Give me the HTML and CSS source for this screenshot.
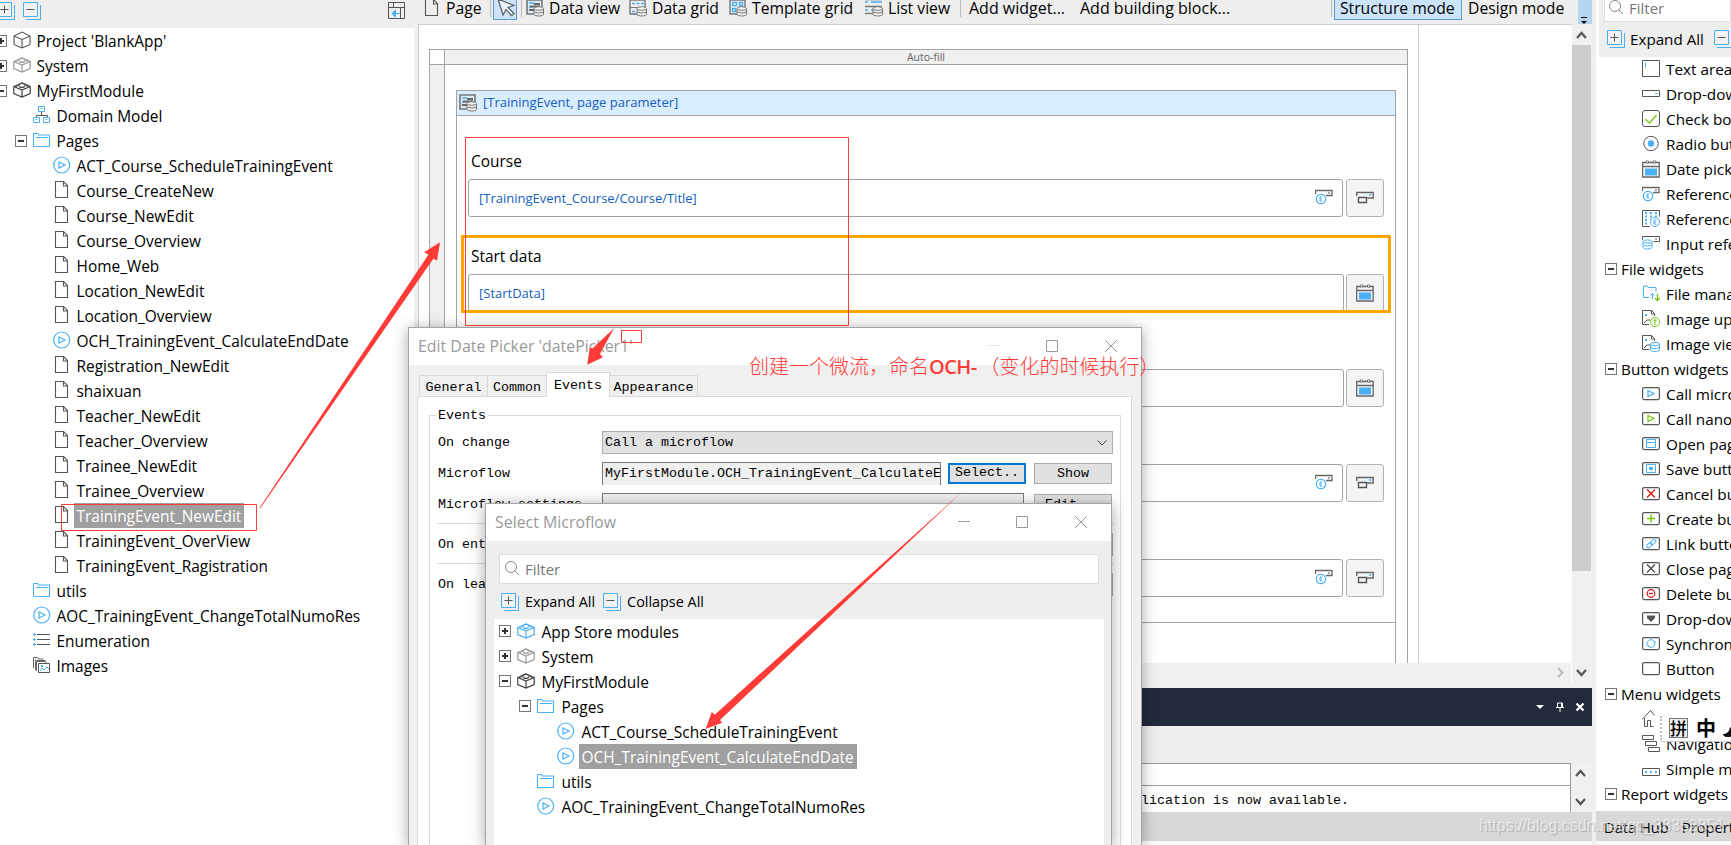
FILE: index.html
```html
<!DOCTYPE html>
<html lang="en">

<head>
    <meta charset="UTF-8">
    <meta name="viewport" content="width=device-width, initial-scale=1.0">
    <title>BlankApp</title>
    <link rel="stylesheet" href="styles.css">
</head>

<body>
    <!-- icon set -->
    <svg class="sprite">
        <symbol id="plus" viewBox="0 0 18 18"><path d="M3 17.5h14.5V3" stroke="#4ab0f5"/><path d="M.5.5h14v14H.5z" fill="#f2f2f2" stroke="#4ab0f5"/><path d="M3.5 7.5h8M7.5 3.5v8" stroke="#555"/></symbol>
        <symbol id="minus" viewBox="0 0 18 18"><path d="M3 17.5h14.5V3" stroke="#4ab0f5"/><path d="M.5.5h14v14H.5z" fill="#f2f2f2" stroke="#4ab0f5"/><path d="M3.5 7.5h8" stroke="#555"/></symbol>
        <symbol id="dock" viewBox="0 0 18 18"><path d="M.5.5h16v16H.5zM.5 5.500h16M12.500 5.500v11M5.500.5v5" stroke="#555"/><path d="M4 11.500h8M7.500 8l-3.500 3.500 3.500 3.500z" stroke="#4ab0f5" fill="#4ab0f5"/></symbol>
        <symbol id="cube" viewBox="0 0 18 18"><path d="M9 1l8 4v8.500L9 17l-8-3.500V5zM1 5l8 3.500L17 5M9 8.500V17" stroke="#444"/></symbol>
        <symbol id="brick" viewBox="0 0 18 18"><path d="M.8 5.500L9 2l8.200 3.500v7L9 16l-8.200-3.500zM.8 5.500L9 9l8.200-3.500M9 9v7" stroke="currentColor" stroke-width="1.200"/><path d="M6 3.500v2l3 1 3-1v-2L9 2zM3 5.500l2.500-1.300M12.500 4.200L15 5.500M6.500 7l2.500-1 2.500 1" stroke="currentColor"/></symbol>
        <symbol id="domain" viewBox="0 0 18 18"><path d="M8.500 6v3M3.500 11.500v-2h11v2" stroke="#555"/><path d="M5.500.5h6v5h-6zM.5 11.500h6v5h-6zM10.500 11.500h6v5h-6zM7.500 2.500h2M2.500 13.500h2M12.500 13.500h2" stroke="#4ab0f5"/></symbol>
        <symbol id="folder" viewBox="0 0 18 18"><path d="M.5 15.500V2.500h4l1 1.500h11v11.500zM3 6.500h12" stroke="#4ab0f5" stroke-width="1.100"/></symbol>
        <symbol id="flow" viewBox="0 0 18 18"><circle cx="8.700" cy="9" r="8" stroke="#4ab0f5" stroke-width="1.200"/><path d="M6 6l6 3-6 3z" stroke="#4ab0f5" stroke-width="1.200"/></symbol>
        <symbol id="page" viewBox="0 0 18 18"><path d="M2.500.5h8l4 4v12h-12zM10.500.5v4.500h4" stroke="#555" stroke-width="1.100"/></symbol>
        <symbol id="enum" viewBox="0 0 18 18"><path d="M4 3.500h13M4 8.500h13M4 13.500h13" stroke="#555"/><path d="M0 3.500h3M1.500 2v3M0 8.500h3M1.500 7v3M0 13.500h3M1.500 12v3" stroke="#4ab0f5"/></symbol>
        <symbol id="images" viewBox="0 0 18 18"><path d="M.5 12V1.500h4l1 1.500h5M2.500 14V3.500M3.500 4.500h9M3.500 15V5.500h9l1 2" stroke="#666"/><path d="M5.500 7.500h11v9h-11z" stroke="#555"/><path d="M7 15l2-3 2 2 3-3 2 2" stroke="#4ab0f5"/><path d="M8 9h2v2H8z" fill="#4ab0f5"/></symbol>
        <symbol id="search" viewBox="0 0 18 18"><circle cx="7" cy="7" r="5.500" stroke="#888"/><path d="M11 11l4 4" stroke="#888"/></symbol>
        <symbol id="cursor" viewBox="0 0 18 18"><path d="M1 0l16 6.500-6 2 6 6-2.500 2-5.500-6-3 5.500z" fill="#e8f3fd" stroke="#666" stroke-width="1.300"/></symbol>
        <symbol id="db" viewBox="0 0 18 18"><path d="M8 9.500v6c1 2 9 2 9.500 0v-6" fill="#eee" stroke="#777"/><ellipse cx="12.800" cy="9.500" rx="4.700" ry="1.800" fill="#f4f4f4" stroke="#777"/><path d="M8 12.500c1 1.800 9 1.800 9.500 0" stroke="#777"/></symbol>
        <symbol id="dview" viewBox="0 0 18 18"><path d="M1 1h15v14H1z" fill="#dfe9f0" stroke="#777" stroke-width="1.600"/><path d="M3 4h5M3 8h3" stroke="#4ab0f5" stroke-width="1.500"/><path d="M8 5h6M4 7.500h10M3 11h5" stroke="#666" stroke-width="1.800"/><use href="#db"/></symbol>
        <symbol id="dgrid" viewBox="0 0 18 18"><path d="M1 1h15v14H1z" stroke="#777" stroke-width="1.400"/><path d="M3 4.500h3M7.500 4.500h3M12 4.500h3M3 12.500h3" stroke="#4ab0f5" stroke-width="1.500"/><path d="M1 8.500h15" stroke="#777"/><use href="#db"/></symbol>
        <symbol id="tgrid" viewBox="0 0 18 18"><path d="M1 1h15v14H1z" stroke="#777" stroke-width="1.400"/><path d="M3.500 3.500h4v3h-4zM10.500 3.500h3v3h-3zM3.500 9.500h3v3h-3z" stroke="#4ab0f5" stroke-width="1.400"/><use href="#db"/></symbol>
        <symbol id="lview" viewBox="0 0 18 18"><path d="M0 3h3M6 3h11M0 11h3M6 11h4" stroke="#4ab0f5" stroke-width="1.500"/><path d="M0 7.500h17M0 14.500h8M0 .5h17" stroke="#777" stroke-width="1.400"/><use href="#db"/></symbol>
        <symbol id="ref" viewBox="0 0 18 18"><path d="M.5 6V2.500h16.500v5h-6" stroke="#666" stroke-width="1.300"/><path d="M13 5h2" stroke="#555"/><circle cx="6" cy="11" r="4.700" stroke="#4ab0f5" stroke-width="1.200"/><path d="M7.500 9H5v4h2.500M5 11h2" stroke="#4ab0f5"/></symbol>
        <symbol id="combo" viewBox="0 0 18 18"><path d="M.7 7V3.500h16.500v5.500h-6" stroke="#666" stroke-width="1.400"/><path d="M2.500 8.500h8v5h-8z" stroke="#555" stroke-width="1.400"/><path d="M13 6h2.500" stroke="#4ab0f5" stroke-width="1.500"/></symbol>
        <symbol id="calendar" viewBox="0 0 18 18"><path d="M.7 2.500h16.500v14.500H.7zM.7 6.500h16.500" stroke="#666" stroke-width="1.300"/><circle cx="5.500" cy="2" r="1.300" fill="#fff" stroke="#666"/><circle cx="12.500" cy="2" r="1.300" fill="#fff" stroke="#666"/><path d="M3 8.500h12v7H3z" fill="#4ab0f5"/></symbol>
        <symbol id="textarea" viewBox="0 0 18 18"><path d="M.5.5h17v16H.5z" stroke="#555"/><path d="M3.500 2.500v5" stroke="#4ab0f5"/></symbol>
        <symbol id="dropdown" viewBox="0 0 18 18"><path d="M.5 5.500h17v6H.5z" stroke="#555"/><path d="M13 8.500h3" stroke="#4ab0f5"/></symbol>
        <symbol id="check" viewBox="0 0 18 18"><rect x=".5" y=".5" width="17" height="16" rx="2.500" stroke="#555"/><path d="M3.500 9l4 4 7-8" stroke="#76c80e" stroke-width="1.200"/></symbol>
        <symbol id="radio" viewBox="0 0 18 18"><circle cx="9" cy="8.500" r="7.200" stroke="#555"/><circle cx="9" cy="8.500" r="3.200" fill="#4ab0f5"/></symbol>
        <symbol id="refset" viewBox="0 0 18 18"><path d="M8 16.500H.5V.5h17v6" stroke="#555"/><path d="M4 2v13M9 2v8M14 2v5" stroke="#4ab0f5" stroke-width="2" stroke-dasharray="2 1.500"/><circle cx="13" cy="12" r="4.500" stroke="#4ab0f5" fill="#fff"/><path d="M14.500 10H12v4h2.500M12 12h2" stroke="#4ab0f5"/></symbol>
        <symbol id="refdb" viewBox="0 0 18 18"><path d="M.5 5V1.500h17v5h-6" stroke="#555"/><path d="M13 4h2" stroke="#555"/><path d="M1 6.500v6c1 2 8 2 9 0v-6" stroke="#4ab0f5" fill="#fff"/><ellipse cx="5.500" cy="6.500" rx="4.500" ry="1.600" stroke="#4ab0f5"/><path d="M1 9.500c1 2 8 2 9 0" stroke="#4ab0f5"/></symbol>
        <symbol id="filemgr" viewBox="0 0 18 18"><path d="M7 12.500H1.500V1h4l1 1.500h7.500V7M10.500 14V8.500M8.500 10.500l2-2 2 2" stroke="#4ab0f5"/><path d="M15.500 8.500v7M13 13l2.500 2.500L18 13" stroke="#76c80e" stroke-width="1.300"/></symbol>
        <symbol id="imgup" viewBox="0 0 18 18"><path d="M7 14.500H.5V.5h9l3 3V6M9.500.5V4h3M2 13l3-3M5 10h3" stroke="#555"/><path d="M3 4h2v2H3z" fill="#4ab0f5"/><circle cx="13" cy="12" r="4.500" stroke="#76c80e" fill="#fff"/><path d="M13 15V9.500M11 11.500l2-2 2 2" stroke="#76c80e"/></symbol>
        <symbol id="imgview" viewBox="0 0 18 18"><path d="M7 14.500H.5V.5h9l3 3V6M9.500.5V4h3M2 13l3-3M5 10h3" stroke="#555"/><path d="M3 4h2v2H3z" fill="#4ab0f5"/><path d="M8.500 9v6c1 2 8 2 9 0V9" stroke="#4ab0f5" fill="#fff"/><ellipse cx="13" cy="9" rx="4.500" ry="1.600" stroke="#4ab0f5" fill="#fff"/><path d="M8.500 12c1 2 8 2 9 0" stroke="#4ab0f5"/></symbol>
        <symbol id="btn" viewBox="0 0 18 18"><rect x=".6" y="2.600" width="16.800" height="12" rx="1.500" stroke="#555" stroke-width="1.200"/></symbol>
        <symbol id="nav" viewBox="0 0 18 18"><path d="M.5.5h11v4H.5zM3.500 6.500h11v4h-11zM6.500 12.500h11v4h-11z" stroke="#555"/></symbol>
        <symbol id="home" viewBox="0 0 18 18"><path d="M0 9.500L8.500.5l4 5M2.500 8v8.500h3v-6h3v6h3" stroke="#555"/></symbol>
        <symbol id="simple" viewBox="0 0 18 18"><path d="M.5 8.500h17v7H.5z" stroke="#555"/><path d="M3 12h2M8 12h2M13 12h2" stroke="#4ab0f5" stroke-width="2"/></symbol>
    </svg>

    <div class="app">
        <aside class="explorer">
            <div class="explorer-bar">
                <svg class="icon"><use href="#plus"/></svg>
                <svg class="icon"><use href="#minus"/></svg>
                <svg class="icon dock"><use href="#dock"/></svg>
            </div>
            <ul class="tree">
                <li><i class="toggle closed"></i><svg class="icon"><use href="#cube"/></svg><span>Project 'BlankApp'</span></li>
                <li><i class="toggle closed"></i><svg class="icon grey"><use href="#brick"/></svg><span>System</span></li>
                <li><i class="toggle"></i><svg class="icon"><use href="#brick"/></svg><span>MyFirstModule</span></li>
                <li class="l1"><svg class="icon"><use href="#domain"/></svg><span>Domain Model</span></li>
                <li class="l1"><i class="toggle"></i><svg class="icon"><use href="#folder"/></svg><span>Pages</span></li>
                <li class="l2"><svg class="icon"><use href="#flow"/></svg><span>ACT_Course_ScheduleTrainingEvent</span></li>
                <li class="l2"><svg class="icon"><use href="#page"/></svg><span>Course_CreateNew</span></li>
                <li class="l2"><svg class="icon"><use href="#page"/></svg><span>Course_NewEdit</span></li>
                <li class="l2"><svg class="icon"><use href="#page"/></svg><span>Course_Overview</span></li>
                <li class="l2"><svg class="icon"><use href="#page"/></svg><span>Home_Web</span></li>
                <li class="l2"><svg class="icon"><use href="#page"/></svg><span>Location_NewEdit</span></li>
                <li class="l2"><svg class="icon"><use href="#page"/></svg><span>Location_Overview</span></li>
                <li class="l2"><svg class="icon"><use href="#flow"/></svg><span>OCH_TrainingEvent_CalculateEndDate</span></li>
                <li class="l2"><svg class="icon"><use href="#page"/></svg><span>Registration_NewEdit</span></li>
                <li class="l2"><svg class="icon"><use href="#page"/></svg><span>shaixuan</span></li>
                <li class="l2"><svg class="icon"><use href="#page"/></svg><span>Teacher_NewEdit</span></li>
                <li class="l2"><svg class="icon"><use href="#page"/></svg><span>Teacher_Overview</span></li>
                <li class="l2"><svg class="icon"><use href="#page"/></svg><span>Trainee_NewEdit</span></li>
                <li class="l2"><svg class="icon"><use href="#page"/></svg><span>Trainee_Overview</span></li>
                <li class="l2 selected"><svg class="icon"><use href="#page"/></svg><span>TrainingEvent_NewEdit</span></li>
                <li class="l2"><svg class="icon"><use href="#page"/></svg><span>TrainingEvent_OverView</span></li>
                <li class="l2"><svg class="icon"><use href="#page"/></svg><span>TrainingEvent_Ragistration</span></li>
                <li class="l1"><svg class="icon"><use href="#folder"/></svg><span>utils</span></li>
                <li class="l1"><svg class="icon"><use href="#flow"/></svg><span>AOC_TrainingEvent_ChangeTotalNumoRes</span></li>
                <li class="l1"><svg class="icon"><use href="#enum"/></svg><span>Enumeration</span></li>
                <li class="l1"><svg class="icon"><use href="#images"/></svg><span>Images</span></li>
            </ul>
        </aside>

        <main class="editor">
            <div class="toolbar">
                <div class="tool t-page"><svg class="icon"><use href="#page"/></svg><span>Page</span></div>
                <i class="sep"></i>
                <div class="tool t-cursor"><svg class="icon"><use href="#cursor"/></svg></div>
                <i class="sep"></i>
                <div class="tool t-dview"><svg class="icon"><use href="#dview"/></svg><span>Data view</span></div>
                <div class="tool t-dgrid"><svg class="icon"><use href="#dgrid"/></svg><span>Data grid</span></div>
                <div class="tool t-tgrid"><svg class="icon"><use href="#tgrid"/></svg><span>Template grid</span></div>
                <div class="tool t-lview"><svg class="icon"><use href="#lview"/></svg><span>List view</span></div>
                <i class="sep"></i>
                <div class="tool t-widget"><span>Add widget...</span></div>
                <div class="tool t-block"><span>Add building block...</span></div>
                <i class="sep"></i>
                <div class="tool t-structure"><span>Structure mode</span></div>
                <div class="tool t-design"><span>Design mode</span></div>
                <div class="overflow"><svg width="8" height="8"><path d="M1 .5h6" stroke="#000"/><path d="M1 4h6L4 7z" fill="#000"/></svg></div>
            </div>

            <div class="work">
                <div class="canvas">
                    <div class="sheet">
                        <div class="layout">
                            <div class="layout-corner"></div>
                            <div class="layout-top">Auto-fill</div>
                            <div class="layout-side"></div>
                            <div class="layout-body">
                                <div class="dataview">
                                    <div class="dataview-head"><svg class="icon"><use href="#dview"/></svg><span>[TrainingEvent, page parameter]</span></div>
                                    <div class="dataview-body">
                                        <div class="group">
                                            <label>Course</label>
                                            <div class="field">
                                                <div class="box"><span>[TrainingEvent_Course/Course/Title]</span><svg class="icon"><use href="#ref"/></svg></div>
                                                <div class="side"><svg class="icon"><use href="#combo"/></svg></div>
                                            </div>
                                        </div>
                                        <div class="group active">
                                            <label>Start data</label>
                                            <div class="field">
                                                <div class="box date"><span>[StartData]</span></div>
                                                <div class="side"><svg class="icon"><use href="#calendar"/></svg></div>
                                            </div>
                                        </div>
                                        <div class="group">
                                            <label></label>
                                            <div class="field">
                                                <div class="box date"></div>
                                                <div class="side"><svg class="icon"><use href="#calendar"/></svg></div>
                                            </div>
                                        </div>
                                        <div class="group">
                                            <label></label>
                                            <div class="field">
                                                <div class="box"><svg class="icon"><use href="#ref"/></svg></div>
                                                <div class="side"><svg class="icon"><use href="#combo"/></svg></div>
                                            </div>
                                        </div>
                                        <div class="group">
                                            <label></label>
                                            <div class="field">
                                                <div class="box"><svg class="icon"><use href="#ref"/></svg></div>
                                                <div class="side"><svg class="icon"><use href="#combo"/></svg></div>
                                            </div>
                                        </div>
                                    </div>
                                </div>
                            </div>
                        </div>
                    </div>
                </div>
                <div class="vscroll">
                    <svg width="20" height="21"><path d="M5 14l4.500-5 4.500 5" stroke="#555" stroke-width="2.200"/></svg>
                    <div class="thumb"></div>
                </div>
            </div>
            <div class="hscroll">
                <svg class="right" width="20" height="20"><path d="M8 5l4.500 4.500L8 14" stroke="#bbb" stroke-width="2"/></svg>
                <svg class="down" width="20" height="20"><path d="M5 7l4.500 5L14 7" stroke="#555" stroke-width="2.200"/></svg>
            </div>

            <div class="console-head">
                <svg width="10" height="10"><path d="M1 3h8L5 7z" fill="#fff"/></svg>
                <svg width="10" height="10"><path d="M2.500 5V1h5v4M1 5.500h8M5 6v4M6.500 1v4" stroke="#fff"/></svg>
                <svg width="10" height="10"><path d="M1.500 1.500l7 7M8.500 1.500l-7 7" stroke="#fff" stroke-width="2.200"/></svg>
            </div>
            <div class="console-gap"></div>
            <div class="console">
                <div class="console-rows">
                    <div class="console-title"></div>
                    <div class="console-row">plication is now available.</div>
                </div>
                <div class="console-scroll">
                    <svg width="20" height="20"><path d="M5 13l4.500-5 4.500 5" stroke="#555" stroke-width="2.200"/></svg>
                    <svg width="20" height="20"><path d="M5 7l4.500 5L14 7" stroke="#555" stroke-width="2.200"/></svg>
                </div>
            </div>
            <div class="footer"></div>
        </main>

        <aside class="toolbox">
            <div class="toolbox-head">
                <div class="filter"><svg class="icon"><use href="#search"/></svg><span>Filter</span></div>
                <div class="actions">
                    <svg class="icon"><use href="#plus"/></svg><span>Expand All</span>
                    <svg class="icon"><use href="#minus"/></svg>
                </div>
            </div>
            <ul class="widgets">
                <li><svg class="icon"><use href="#textarea"/></svg><span>Text area</span></li>
                <li><svg class="icon"><use href="#dropdown"/></svg><span>Drop-down</span></li>
                <li><svg class="icon"><use href="#check"/></svg><span>Check box</span></li>
                <li><svg class="icon"><use href="#radio"/></svg><span>Radio buttons</span></li>
                <li><svg class="icon"><use href="#calendar"/></svg><span>Date picker</span></li>
                <li><svg class="icon"><use href="#ref"/></svg><span>Reference selector</span></li>
                <li><svg class="icon"><use href="#refset"/></svg><span>Reference set</span></li>
                <li><svg class="icon"><use href="#refdb"/></svg><span>Input reference</span></li>
                <li class="head"><i class="toggle"></i><span>File widgets</span></li>
                <li><svg class="icon"><use href="#filemgr"/></svg><span>File manager</span></li>
                <li><svg class="icon"><use href="#imgup"/></svg><span>Image uploader</span></li>
                <li><svg class="icon"><use href="#imgview"/></svg><span>Image viewer</span></li>
                <li class="head"><i class="toggle"></i><span>Button widgets</span></li>
                <li><svg class="icon"><use href="#btn"/><path d="M6 5.500l6 3-6 3z" stroke="#4ab0f5" stroke-width="1.200"/></svg><span>Call microflow</span></li>
                <li><svg class="icon"><use href="#btn"/><path d="M6 5.500l6 3-6 3z" stroke="#76c80e" stroke-width="1.200"/></svg><span>Call nanoflow</span></li>
                <li><svg class="icon"><use href="#btn"/><path d="M4.500 4.500h9v8h-9zM4.500 7.500h9" stroke="#4ab0f5"/></svg><span>Open page</span></li>
                <li><svg class="icon"><use href="#btn"/><path d="M4.500 4.500h9v8h-9z" stroke="#4ab0f5"/><circle cx="9" cy="8.500" r="2" fill="#4ab0f5"/></svg><span>Save button</span></li>
                <li><svg class="icon"><use href="#btn"/><path d="M5 4.500l8 8M13 4.500l-8 8" stroke="#e01010" stroke-width="1.300"/></svg><span>Cancel button</span></li>
                <li><svg class="icon"><use href="#btn"/><path d="M5 8.500h8M9 4.500v8" stroke="#76c80e" stroke-width="1.500"/></svg><span>Create button</span></li>
                <li><svg class="icon"><use href="#btn"/><g transform="rotate(-40 9 8.500)" stroke="#4ab0f5"><rect x="3.500" y="7" width="6" height="3.500" rx="1.700"/><rect x="8.500" y="7" width="6" height="3.500" rx="1.700"/></g></svg><span>Link button</span></li>
                <li><svg class="icon"><use href="#btn"/><path d="M5 4.500l8 8M13 4.500l-8 8" stroke="#444" stroke-width="1.200"/></svg><span>Close page</span></li>
                <li><svg class="icon"><use href="#btn"/><circle cx="9" cy="8.500" r="3.800" stroke="#e01010" stroke-width="1.200"/><path d="M7 8.500h4" stroke="#e01010" stroke-width="1.200"/></svg><span>Delete button</span></li>
                <li><svg class="icon"><use href="#btn"/><path d="M5 5.500h8v2.500l-4 4-4-4z" fill="#555"/></svg><span>Drop-down button</span></li>
                <li><svg class="icon"><use href="#btn"/><path d="M5 9a4 4 0 0 1 7-3M13 8a4 4 0 0 1-7 3M11 7h3M4 10h3" stroke="#4ab0f5"/></svg><span>Synchronize</span></li>
                <li><svg class="icon"><use href="#btn"/></svg><span>Button</span></li>
                <li class="head"><i class="toggle"></i><span>Menu widgets</span></li>
                <li><svg class="icon"><use href="#home"/></svg></li>
                <li><svg class="icon"><use href="#nav"/></svg><span>Navigation</span></li>
                <li><svg class="icon"><use href="#simple"/></svg><span>Simple menu</span></li>
                <li class="head"><i class="toggle"></i><span>Report widgets</span></li>
            </ul>
            <div class="tabs-bottom"><span>Data Hub</span><span>Properties</span></div>
        </aside>
    </div>

    <!-- date picker dialog -->
    <div class="dialog edit">
        <div class="titlebar">
            <span class="title">Edit Date Picker 'datePicker1'</span>
            <svg class="winbtns" width="130" height="14"><path d="M0 6.500h12" stroke="#e5e5e5"/><path d="M58.500 1.500h11v11h-11z" stroke="#999"/><path d="M117 1l12 12M129 1l-12 12" stroke="#999"/></svg>
        </div>
        <div class="dialog-tabs">
            <span class="tab general">General</span>
            <span class="tab common">Common</span>
            <span class="tab events">Events</span>
            <span class="tab appearance">Appearance</span>
        </div>
        <div class="tabpage">
            <div class="fieldset">
                <span class="legend">Events</span>
                <div class="row">
                    <span class="name">On change</span>
                    <div class="select">Call a microflow<svg width="10" height="6"><path d="M.5.5L5 5 9.500.5" stroke="#444"/></svg></div>
                </div>
                <div class="row">
                    <span class="name">Microflow</span>
                    <div class="entry">MyFirstModule.OCH_TrainingEvent_CalculateEndDate</div>
                    <div class="push focus">Select..</div>
                    <div class="push">Show</div>
                </div>
                <div class="row">
                    <span class="name">Microflow settings</span>
                    <div class="entry wide"></div>
                    <div class="push edit-btn">Edit...</div>
                </div>
                <div class="row ruled first">
                    <span class="name">On enter</span>
                    <div class="select"></div>
                </div>
                <div class="row ruled">
                    <span class="name">On leave</span>
                    <div class="select"></div>
                </div>
            </div>
        </div>
    </div>

    <!-- microflow picker -->
    <div class="dialog pick">
        <div class="titlebar">
            <span class="title">Select Microflow</span>
            <svg class="winbtns" width="130" height="14"><path d="M0 6.500h12" stroke="#999"/><path d="M58.500 1.500h11v11h-11z" stroke="#999"/><path d="M117 1l12 12M129 1l-12 12" stroke="#999"/></svg>
        </div>
        <div class="filter"><svg class="icon"><use href="#search"/></svg><span>Filter</span></div>
        <div class="actions">
            <svg class="icon"><use href="#plus"/></svg><span>Expand All</span>
            <svg class="icon"><use href="#minus"/></svg><span>Collapse All</span>
        </div>
        <ul class="tree">
            <li><i class="toggle closed"></i><svg class="icon blue"><use href="#brick"/></svg><span>App Store modules</span></li>
            <li><i class="toggle closed"></i><svg class="icon grey"><use href="#brick"/></svg><span>System</span></li>
            <li><i class="toggle"></i><svg class="icon"><use href="#brick"/></svg><span>MyFirstModule</span></li>
            <li class="l1"><i class="toggle"></i><svg class="icon"><use href="#folder"/></svg><span>Pages</span></li>
            <li class="l2"><svg class="icon"><use href="#flow"/></svg><span>ACT_Course_ScheduleTrainingEvent</span></li>
            <li class="l2 selected"><svg class="icon"><use href="#flow"/></svg><span>OCH_TrainingEvent_CalculateEndDate</span></li>
            <li class="l1"><svg class="icon"><use href="#folder"/></svg><span>utils</span></li>
            <li class="l1"><svg class="icon"><use href="#flow"/></svg><span>AOC_TrainingEvent_ChangeTotalNumoRes</span></li>
        </ul>
    </div>

    <!-- input method bar -->
    <div class="ime">
        <i class="grip"></i><span class="pin">拼</span><span class="zhong">中</span>
        <svg width="10" height="12"><path d="M0 8c4 0 6-2 7-7 5 5 3 11-3 10-2 0-4-1-4-3z" fill="#111"/></svg>
    </div>

    <!-- red marks -->
    <svg class="marks" width="1731" height="845">
        <g stroke="#ff3b38">
            <path d="M465.500 137.500h383v188h-383zM621.500 330.500h20v12h-20zM61.500 504.500h195v26h-195z"/>
        </g>
        <g fill="#ff3b38">
            <path d="M259.500 508L428.500 254.500 424 252.300 440 242.300 437 260.700 433.500 258.500 260.500 508z"/>
            <path d="M614.300 328L592.700 348.300 589.700 348 587.300 364.800 603 357.300 600 354 601.500 351z"/>
            <path d="M963 491L715 714.500 711.700 712.300 705.600 729 722.300 722.700 720 720z"/>
        </g>
    </svg>
    <div class="note">创建一个微流，命名<b>OCH-</b>（变化的时候执行）</div>
    <div class="watermark">https://blog.csdn.net/qq_38352851</div>
</body>

</html>
```
FILE: styles.css
```css
*,
*::before,
*::after {
    box-sizing: border-box;
    margin: 0;
    padding: 0;
}

body {
    position: relative;
    width: 1731px;
    height: 845px;
    overflow: hidden;
    background: #f0f0f0;
    font-family: "Open Sans", "Noto Sans", sans-serif;
    font-size: 15.450px;
    color: #000;
}

svg {
    fill: none;
    flex: none;
}

.sprite {
    position: absolute;
    width: 0;
    height: 0;
}

.icon {
    width: 18px;
    height: 18px;
    color: #444;
}

.icon.grey {
    color: #999;
}

.icon.blue {
    color: #4ab0f5;
}

.app {
    display: flex;
    height: 845px;
    background: #f0f0f0;
}

/* project explorer */
.explorer {
    width: 414px;
    margin-right: 4px;
    background: #fff;
    overflow: hidden;
    flex: none;
}

.explorer-bar {
    display: flex;
    gap: 8px;
    height: 28px;
    padding: 2px 8px 0 0;
    margin-left: -3px;
    background: #eee;
}

.explorer-bar .dock {
    margin-left: auto;
}

.tree,
.widgets {
    list-style: none;
}

.tree li,
.widgets li {
    display: flex;
    align-items: center;
    height: 25px;
    white-space: nowrap;
}

.tree li {
    position: relative;
    padding-left: 13px;
}

.tree .l1 {
    padding-left: 33px;
}

.tree .l2 {
    padding-left: 53px;
}

.tree .icon {
    margin-top: -1px;
}

.tree span {
    height: 25px;
    line-height: 26px;
    margin-left: 3px;
    padding: 0 3px 0 2.500px;
}

.tree .selected span {
    background: #a0a0a0;
    color: #fff;
}

.toggle {
    position: relative;
    flex: none;
    width: 12px;
    height: 12px;
    border: 1px solid #777;
    background: #fff;
}

.tree .toggle {
    margin-left: -18px;
    margin-right: 6px;
}

.pick .toggle {
    margin-top: -2px;
}

.toggle::before {
    content: "";
    position: absolute;
    left: 2px;
    top: 4px;
    width: 6px;
    height: 2px;
    background: #333;
}

.toggle.closed::after {
    content: "";
    position: absolute;
    left: 4px;
    top: 2px;
    width: 2px;
    height: 6px;
    background: #333;
}

/* page editor */
.editor {
    display: flex;
    flex-direction: column;
    width: 1174px;
    flex: none;
    margin-right: 4px;
}

.toolbar {
    display: flex;
    height: 24px;
    background: #eee;
    font-size: 15.700px;
    line-height: 17px;
    white-space: nowrap;
}

.toolbar .sep {
    width: 1px;
    height: 17px;
    background: #bbb;
    flex: none;
}

.tool {
    display: flex;
    height: 20px;
    flex: none;
}

.tool .icon {
    margin-top: -1px;
}

.tool span {
    margin-left: 5px;
}

.t-page {
    width: 72px;
    padding-left: 5px;
}

.t-cursor {
    width: 24px;
    margin: 0 4px 0 2px;
    padding-left: 3px;
    background: #cce4fb;
    border: 1px solid #5a9bdc;
    border-top: 0;
}

.t-dview {
    width: 107px;
    padding-left: 4px;
}

.t-dgrid {
    width: 100px;
}

.t-tgrid {
    width: 136px;
}

.t-lview {
    width: 95px;
}

.t-widget {
    width: 114px;
    padding-left: 3px;
}

.t-block {
    width: 256px;
}

.t-widget,
.t-block {
    font-size: 16px;
}

.t-structure {
    width: 128px;
    margin-left: 2px;
    background: #cce4fb;
    border: 1px solid #5a9bdc;
    border-top: 0;
}

.t-design {
    width: 116px;
    padding-left: 1px;
}

.overflow {
    width: 14px;
    height: 24px;
    padding: 11px 0 0 2px;
    background: #b5d6f2;
}

.work {
    display: flex;
    height: 639px;
}

.canvas {
    width: 1154px;
    background: #fff;
    border-top: 1px solid #ccc;
    border-left: 1px solid #ccc;
}

.sheet {
    width: 1000px;
    height: 638px;
    padding: 24px 0 0 10px;
    border-right: 1px solid #ccc;
}

.layout {
    display: grid;
    grid-template-columns: 16px 963px;
    grid-template-rows: 15px 599px;
    width: 979px;
}

.layout-corner,
.layout-top,
.layout-side,
.layout-body {
    border-top: 1px solid #a3a3a3;
    border-left: 1px solid #a3a3a3;
}

.layout-top {
    width: 964px;
    margin-left: -1px;
    border-right: 1px solid #a3a3a3;
    background: #f0f0f0;
    font-size: 10.500px;
    line-height: 15px;
    text-align: center;
    color: #666;
}

.layout-corner,
.layout-side {
    width: 15px;
}

.layout-side {
    background: #f0f0f0;
}

.layout-body {
    width: 964px;
    margin-left: -1px;
    padding: 25px 11px 0;
    border-right: 1px solid #a3a3a3;
}

.dataview {
    height: 573px;
    border: 1px solid #a3a3a3;
    border-bottom: 0;
}

.dataview-head {
    display: flex;
    align-items: center;
    height: 25px;
    padding-left: 2px;
    background: #d9edfd;
    border-bottom: 1px solid #a3a3a3;
    color: #1560bd;
    font-size: 13px;
}

.dataview-head span {
    margin: -2px 0 0 6px;
}

.dataview-body {
    height: 507px;
    padding: 24px 11px 0 11px;
    border-bottom: 1px solid #a3a3a3;
}

.group {
    position: relative;
    height: 95px;
}

.group label {
    display: block;
    height: 39px;
    padding: 8px 0 0 3px;
    line-height: 26px;
}

.field {
    display: flex;
    justify-content: space-between;
}

.box {
    display: flex;
    align-items: center;
    justify-content: space-between;
    width: 875px;
    height: 38px;
    padding: 0 9px 0 10px;
    border: 1px solid #a3a3a3;
    border-radius: 3px;
    color: #1560bd;
    font-size: 13px;
}

.box .icon {
    margin-top: -2px;
}

.box .icon:first-child {
    margin-left: auto;
}

.box.date {
    width: 876px;
}

.side {
    display: flex;
    align-items: center;
    justify-content: center;
    width: 38px;
    height: 38px;
    background: #f4f4f4;
    border: 1px solid #b3b3b3;
    border-radius: 3px;
}

.group.active::after {
    content: "";
    position: absolute;
    left: -7px;
    top: 0;
    width: 930px;
    height: 78px;
    border: 3px solid #ffa500;
}

.group.active .field {
    height: 38px;
    overflow: hidden;
}

.vscroll {
    width: 20px;
    background: #f0f0f0;
}

.vscroll svg {
    display: block;
}

.thumb {
    width: 19px;
    height: 526px;
    background: #cdcdcd;
}

.hscroll {
    display: flex;
    justify-content: flex-end;
    height: 25px;
    background: #f0f0f0;
}

.hscroll .right {
    margin-right: 1px;
}

.hscroll .down {
    border-left: 1px solid #fff;
    width: 21px;
}

.console-head {
    display: flex;
    align-items: center;
    justify-content: flex-end;
    gap: 10px;
    height: 38px;
    padding-right: 7px;
    background: #232a3b;
}

.console-gap {
    height: 37px;
    background: #eee;
}

.console {
    display: flex;
    height: 49px;
}

.console-rows {
    width: 1153px;
    background: #fff;
    border-top: 1px solid #999;
    border-right: 1px solid #999;
}

.console-title {
    height: 22px;
    border-bottom: 1px solid #999;
}

.console-row {
    padding-left: 715px;
    font: 13.330px/29px "Liberation Mono", monospace;
}

.console-scroll {
    display: flex;
    flex-direction: column;
    justify-content: space-between;
    width: 21px;
    background: #f0f0f0;
}

.footer {
    height: 33px;
    background: #d8d8d8;
    border-bottom: 4px solid #fafafa;
}

/* widget toolbox */
.toolbox {
    width: 135px;
    overflow: hidden;
    background: #fff;
}

.toolbox-head {
    height: 57px;
    margin-left: 3px;
    padding-left: 5px;
    background: #eee;
}

.filter {
    display: flex;
    align-items: center;
    background: #fff;
    border: 1px solid #ddd;
    color: #777;
    font-size: 15px;
}

.toolbox .filter {
    height: 22px;
    border-top: 0;
    padding: 0 0 5px 3px;
}

.toolbox .filter span {
    margin-left: 3px;
}

.actions {
    display: flex;
    align-items: center;
    white-space: nowrap;
    font-size: 14.400px;
}

.toolbox .actions {
    height: 34px;
    padding-left: 3px;
    font-size: 15.200px;
}

.toolbox .actions span {
    margin: 0 10px 0 5px;
}

.widgets {
    height: 755px;
    margin-top: -1px;
    overflow: hidden;
    font-size: 15.300px;
}

.widgets li {
    padding-left: 46px;
}

.widgets .head {
    padding-left: 9px;
}

.widgets span {
    margin-left: 6px;
}

.widgets .head span {
    margin-left: 4px;
}

.tabs-bottom {
    display: flex;
    gap: 13px;
    height: 34px;
    padding-left: 8px;
    background: #d8d8d8;
    border-bottom: 4px solid #fafafa;
    font-size: 14.700px;
    line-height: 32px;
    white-space: nowrap;
}

/* dialogs */
.dialog {
    position: absolute;
    background: #f0f0f0;
    border: 1px solid #a5a5a5;
    border-bottom: 0;
    box-shadow: 0 2px 14px rgba(0, 0, 0, 0.35);
}

.dialog.edit {
    left: 408px;
    top: 327px;
    width: 734px;
    height: 518px;
    font: 13.330px/20px "Liberation Mono", monospace;
}

.dialog.pick {
    left: 485px;
    top: 503px;
    width: 627px;
    height: 342px;
    background: #eee;
}

.titlebar {
    display: flex;
    align-items: center;
    justify-content: space-between;
    height: 37px;
    padding: 0 23px 1px 9px;
    background: #fff;
    font: 15.900px "Open Sans", sans-serif;
    color: #999;
}

.winbtns {
    margin-top: -1px;
}

.dialog-tabs {
    display: flex;
    align-items: flex-end;
    height: 31px;
    padding-left: 10px;
}

.tab {
    height: 21px;
    padding-top: 2px;
    border: 1px solid #d9d9d9;
    border-bottom: 0;
    text-align: center;
}

.general {
    width: 69px;
}

.common {
    width: 59px;
    border-left: 0;
}

.events {
    position: relative;
    width: 64px;
    height: 25px;
    margin: 0 0 -1px -1px;
    padding-top: 3px;
    background: #fff;
}

.appearance {
    width: 88px;
    border-left: 0;
}

.tabpage {
    width: 715px;
    height: 450px;
    margin-left: 8px;
    padding: 18px 10px 0 11px;
    background: #fff;
    border: 1px solid #d9d9d9;
}

.fieldset {
    height: 432px;
    padding: 1px 6px 0 7px;
    border: 1px solid #dcdcdc;
}

.legend {
    display: block;
    width: 51px;
    height: 20px;
    margin-top: -12px;
    padding-left: 1px;
    background: #fff;
    line-height: 22px;
}

.row {
    display: flex;
    height: 31px;
    padding-top: 4px;
    line-height: 24px;
    white-space: nowrap;
}

.legend + .row {
    margin-top: 2px;
}

.name {
    width: 165px;
    padding-left: 1px;
    flex: none;
}

.select {
    display: flex;
    align-items: center;
    justify-content: space-between;
    width: 511px;
    height: 23px;
    padding: 0 5px 0 2px;
    background: #e1e1e1;
    border: 1px solid #adadad;
    flex: none;
}

.entry {
    width: 339px;
    height: 23px;
    padding-left: 2px;
    overflow: hidden;
    background: #f0f0f0;
    border: 1px solid #7a7a7a;
    border-bottom: 0;
    line-height: 21px;
    flex: none;
}

.entry.wide {
    width: 422px;
}

.push {
    width: 78px;
    height: 21px;
    margin: 1px 0 0 8px;
    background: #e1e1e1;
    border: 1px solid #adadad;
    line-height: 19px;
    text-align: center;
    flex: none;
}

.push.focus {
    margin-left: 7px;
    border: 2px solid #0078d7;
    line-height: 16px;
}

.push.edit-btn {
    margin-left: 10px;
}

.ruled {
    height: 40px;
    padding-top: 9px;
    border-top: 1px solid #dcdcdc;
}

.ruled.first {
    margin-top: 3px;
}

.pick .filter {
    width: 600px;
    height: 30px;
    margin: 13px 0 0 13px;
    padding: 0 0 0 4px;
}

.pick .filter span {
    margin-left: 3px;
}

.pick .actions {
    height: 35px;
    padding-left: 15px;
}

.pick .actions span {
    margin: 0 8px 0 6px;
}

.pick .tree {
    width: 610px;
    height: 226px;
    margin-left: 8px;
    background: #fff;
}

.pick .tree li {
    padding-left: 23px;
}

.pick .tree .l1 {
    padding-left: 43px;
}

.pick .tree .l2 {
    padding-left: 63px;
}

.pick .tree span {
    margin-left: 4px;
}

/* input method bar */
.ime {
    position: absolute;
    left: 1660px;
    top: 714px;
    width: 71px;
    height: 28px;
    display: flex;
    align-items: center;
    background: #fff;
    border-bottom: 1px solid #ccc;
    font-family: "Noto Sans CJK SC", sans-serif;
    overflow: hidden;
}

.grip {
    height: 24px;
    margin: 0 7px 0 0;
    border-left: 2px dotted #bbb;
}

.pin {
    width: 20px;
    height: 20px;
    border: 1px solid #777;
    background: #f0f0f0;
    font-size: 17px;
    font-weight: 500;
    line-height: 17px;
    text-align: center;
}

.zhong {
    margin: 0 7px 0 8px;
    font-size: 20px;
    font-weight: bold;
    line-height: 24px;
}

.ime svg {
    margin-top: 8px;
}

.marks {
    position: absolute;
    left: 0;
    top: 0;
}

.note {
    position: absolute;
    left: 749px;
    top: 352px;
    font: 300 20px/30px "Open Sans", "Noto Sans CJK SC", sans-serif;
    color: #ff3b38;
    white-space: nowrap;
}

.note b {
    margin-right: 3px;
    font-weight: 600;
    font-size: 20px;
    letter-spacing: -0.600px;
}

.watermark {
    position: absolute;
    left: 1479px;
    top: 815px;
    font: 16px/22px "Liberation Sans", sans-serif;
    color: rgba(255, 255, 255, 0.6);
    text-shadow: 1px 1px 1px rgba(120, 120, 120, 0.45);
}
```
